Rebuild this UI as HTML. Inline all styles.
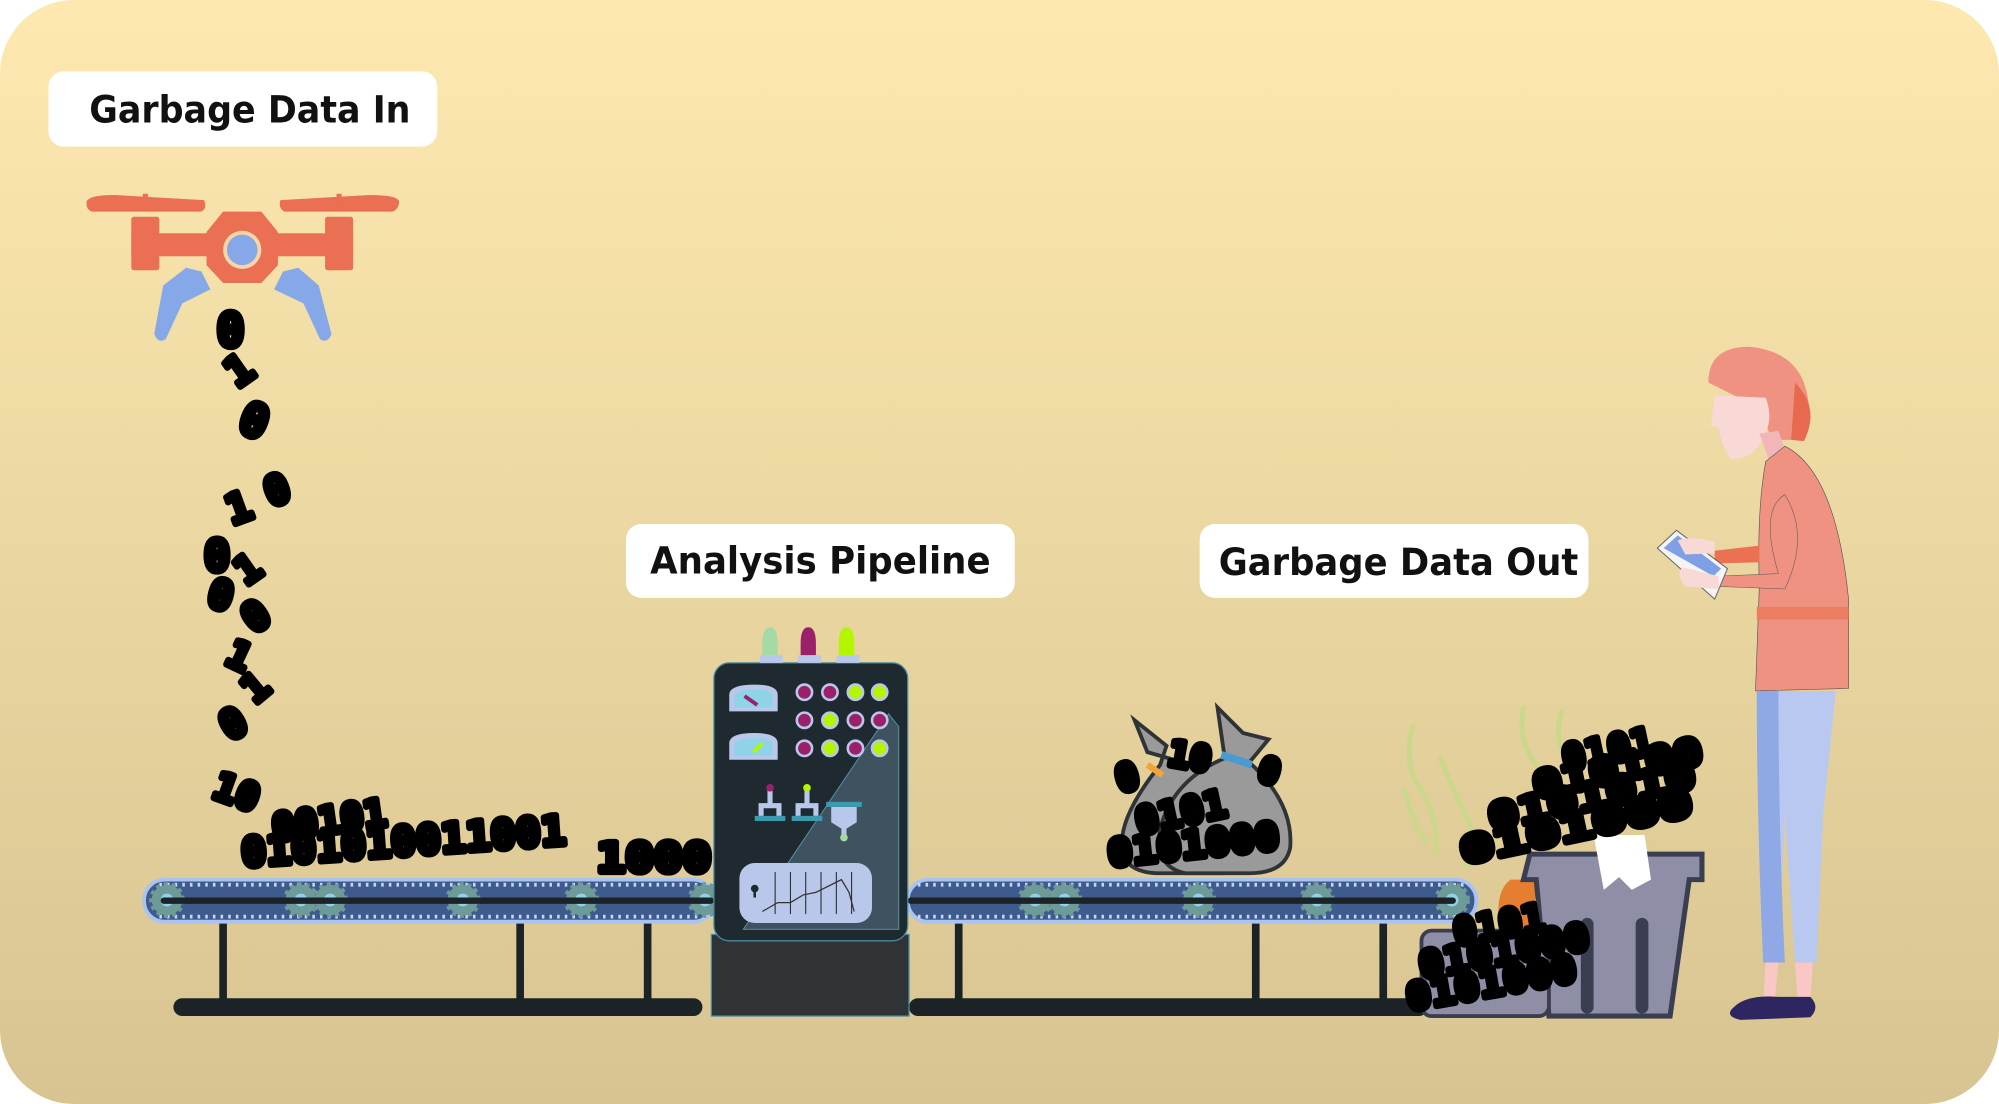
<!DOCTYPE html>
<html><head><meta charset="utf-8"><style>
html,body{margin:0;padding:0;background:#fff;}
svg{display:block}
.lbl{font-family:"DejaVu Sans","Liberation Sans",sans-serif;font-weight:bold;font-size:29px;fill:#111}
.d{font-family:"DejaVu Sans Mono","Liberation Mono",monospace;font-weight:bold;fill:#000;stroke:#000;stroke-width:5;stroke-linejoin:round}
</style></head><body>
<svg width="1999" height="1104" viewBox="0 0 1568 866" preserveAspectRatio="none" xmlns="http://www.w3.org/2000/svg">
<defs>
<linearGradient id="bg" x1="0" y1="0" x2="0" y2="1"><stop offset="0" stop-color="#fde9b0"/><stop offset="1" stop-color="#d8c491"/></linearGradient>
<g id="gear"><circle r="12" fill="#6e9b98" stroke="#6e9b98" stroke-width="4" stroke-dasharray="3 3"/><circle r="5" fill="#8fd3e8"/></g>
</defs>
<rect x="0" y="0" width="1568" height="866" rx="58" fill="url(#bg)"/>

<!-- labels -->
<rect x="38" y="56" width="305" height="59" rx="12" fill="#fff"/>
<text x="70" y="96" class="lbl" textLength="252" lengthAdjust="spacingAndGlyphs">Garbage Data In</text>
<rect x="491" y="411" width="305" height="58" rx="12" fill="#fff"/>
<text x="510" y="450" class="lbl" textLength="267" lengthAdjust="spacingAndGlyphs">Analysis Pipeline</text>
<rect x="941" y="411" width="305" height="58" rx="12" fill="#fff"/>
<text x="956" y="451" class="lbl" textLength="282" lengthAdjust="spacingAndGlyphs">Garbage Data Out</text>

<!-- drone -->
<path d="M68 158 Q70 153 90 153 L160 157 Q163 163 158 166 L72 166 Q67 164 68 158Z" fill="#ea6f53"/>
<path d="M220 157 L290 153 Q312 153 313 158 Q313 164 308 166 L223 166 Q218 163 220 157Z" fill="#ea6f53"/>
<rect x="112" y="152" width="4" height="12" fill="#ea6f53"/><rect x="264" y="152" width="4" height="12" fill="#ea6f53"/>
<rect x="103" y="170" width="22" height="42" rx="2" fill="#ea6f53"/>
<rect x="255" y="170" width="22" height="42" rx="2" fill="#ea6f53"/>
<rect x="103" y="183" width="174" height="18" fill="#ea6f53"/>
<path d="M175 166 L205 166 L218 182 L218 208 L205 222 L175 222 L162 208 L162 182Z" fill="#ea6f53"/>
<circle cx="190" cy="196" r="15" fill="#f7d6a6"/><circle cx="190" cy="196" r="12" fill="#87a8e8"/>
<path d="M158 213 L146 210 L128 224 L121 262 Q124 270 130 266 L143 238 L165 227Z" fill="#87a8e8"/>
<path d="M222 213 L234 210 L250 224 L260 262 Q257 270 251 266 L238 238 L215 227Z" fill="#87a8e8"/>

<!-- falling digits -->
<g class="d">
<text x="170" y="272" font-size="36">0</text>
<text x="0" y="0" font-size="32" transform="translate(186,305) rotate(-35)">1</text>
<text x="0" y="0" font-size="36" transform="translate(185,338) rotate(20)">0</text>
<text x="0" y="0" font-size="32" transform="translate(182,412) rotate(-20)">1</text>
<text x="0" y="0" font-size="32" transform="translate(212,398) rotate(-20)">0</text>
<text x="160" y="448" font-size="34">0</text>
<text x="0" y="0" font-size="30" transform="translate(193,460) rotate(-35)">1</text>
<text x="0" y="0" font-size="32" transform="translate(161,475) rotate(15)">0</text>
<text x="0" y="0" font-size="32" transform="translate(199,498) rotate(-35)">0</text>
<text x="0" y="0" font-size="30" transform="translate(175,520) rotate(25)">1</text>
<text x="0" y="0" font-size="30" transform="translate(200,553) rotate(-40)">1</text>
<text x="0" y="0" font-size="32" transform="translate(180,582) rotate(-30)">0</text>
<text x="0" y="0" font-size="30" transform="translate(165,625) rotate(20)">10</text>
<text x="0" y="0" font-size="32" transform="translate(190,680) rotate(-4)" textLength="255" lengthAdjust="spacingAndGlyphs">0101010011001</text>
<text x="0" y="0" font-size="30" transform="translate(215,660) rotate(-8)">00101</text>
<text x="468" y="684" font-size="32" textLength="90" lengthAdjust="spacingAndGlyphs">1000</text>
</g>

<!-- conveyor legs -->
<g fill="#1c2326">
<rect x="172" y="712" width="6" height="72"/><rect x="405" y="712" width="6" height="72"/><rect x="505" y="712" width="6" height="72"/>
<rect x="749" y="712" width="6" height="72"/><rect x="982" y="712" width="6" height="72"/><rect x="1082" y="712" width="6" height="72"/>
<rect x="136" y="783" width="415" height="14" rx="7"/><rect x="713" y="783" width="407" height="14" rx="7"/>
</g>
<g stroke="#a9c4f0" stroke-width="3" fill="#3f5a8c">
<rect x="113" y="690" width="447" height="33" rx="16"/>
<rect x="712" y="690" width="446" height="33" rx="16"/>
</g>
<g stroke="#c6d7f6" stroke-width="3" stroke-dasharray="2 4" fill="none">
<line x1="125" y1="694" x2="560" y2="694"/><line x1="125" y1="719" x2="560" y2="719"/>
<line x1="720" y1="694" x2="1148" y2="694"/><line x1="720" y1="719" x2="1148" y2="719"/>
</g>
<g>
<use href="#gear" x="131" y="706"/><use href="#gear" x="236" y="706"/><use href="#gear" x="259" y="706"/><use href="#gear" x="363" y="706"/><use href="#gear" x="456" y="706"/><use href="#gear" x="553" y="706"/>
<use href="#gear" x="812" y="706"/><use href="#gear" x="835" y="706"/><use href="#gear" x="940" y="706"/><use href="#gear" x="1033" y="706"/><use href="#gear" x="1139" y="706"/>
</g>
<rect x="126" y="704" width="434" height="5" rx="2.5" fill="#1c2326"/>
<rect x="712" y="704" width="430" height="5" rx="2.5" fill="#1c2326"/>

<!-- machine -->
<rect x="558" y="733" width="155" height="64" fill="#2f3335" stroke="#4a8aa0"/>
<rect x="560" y="520" width="152" height="218" rx="12" fill="#1f2a30" stroke="#4a8aa0"/>
<path d="M583 729 L697 560 L705 570 L705 729Z" fill="#3e5260" stroke="#5a9ab0" stroke-width="0.7"/>
<path d="M598 505 Q598 492 604 492 Q610 492 610 505 L610 514 L598 514Z" fill="#a5d9a5"/>
<path d="M628 505 Q628 492 634 492 Q640 492 640 505 L640 514 L628 514Z" fill="#9c1f6a"/>
<path d="M658 505 Q658 492 664 492 Q670 492 670 505 L670 514 L658 514Z" fill="#b4f500"/>
<g fill="#b9c8ea"><rect x="596" y="514" width="18" height="6"/><rect x="626" y="514" width="18" height="6"/><rect x="656" y="514" width="18" height="6"/></g>
<path d="M572 558 L572 545 Q572 537 592 537 Q610 537 610 545 L610 558Z" fill="#b9c8ea"/>
<path d="M576 555 L576 546 Q578 541 592 541 Q606 541 606 546 L606 555Z" fill="#8fd3e8"/>
<line x1="584" y1="546" x2="594" y2="553" stroke="#9c1f6a" stroke-width="3"/>
<path d="M572 596 L572 583 Q572 575 592 575 Q610 575 610 583 L610 596Z" fill="#b9c8ea"/>
<path d="M576 593 L576 584 Q578 579 592 579 Q606 579 606 584 L606 593Z" fill="#8fd3e8"/>
<line x1="598" y1="583" x2="591" y2="590" stroke="#b4f500" stroke-width="3"/>
<g stroke="#b9c8ea" stroke-width="2">
<circle cx="631" cy="543" r="6" fill="#9c1f6a"/><circle cx="651" cy="543" r="6" fill="#9c1f6a"/><circle cx="671" cy="543" r="6" fill="#b4f500"/><circle cx="690" cy="543" r="6" fill="#b4f500"/>
<circle cx="631" cy="565" r="6" fill="#9c1f6a"/><circle cx="651" cy="565" r="6" fill="#b4f500"/><circle cx="671" cy="565" r="6" fill="#9c1f6a"/><circle cx="690" cy="565" r="6" fill="#9c1f6a"/>
<circle cx="631" cy="587" r="6" fill="#9c1f6a"/><circle cx="651" cy="587" r="6" fill="#b4f500"/><circle cx="671" cy="587" r="6" fill="#9c1f6a"/><circle cx="690" cy="587" r="6" fill="#b4f500"/>
</g>
<g fill="#b9c8ea">
<path d="M595 640 L595 630 L602 630 L602 620 L606 620 L606 630 L613 630 L613 640 L609 640 L609 634 L599 634 L599 640Z"/>
<path d="M624 640 L624 630 L631 630 L631 620 L635 620 L635 630 L642 630 L642 640 L638 640 L638 634 L628 634 L628 640Z"/>
<path d="M652 633 L672 633 L672 645 L664 650 L664 656 L660 656 L660 650 L652 645Z"/>
</g>
<rect x="592" y="640" width="24" height="4" fill="#3b9ab0"/><rect x="621" y="640" width="24" height="4" fill="#3b9ab0"/><rect x="648" y="629" width="28" height="4" fill="#3b9ab0"/>
<circle cx="604" cy="618" r="3" fill="#9c1f6a"/><circle cx="633" cy="618" r="3" fill="#b4f500"/><circle cx="662" cy="657" r="3" fill="#a5d9a5"/>
<rect x="580" y="677" width="104" height="47" rx="12" fill="#b9c8ea"/>
<g stroke="#222" stroke-width="0.8"><line x1="608" y1="684" x2="608" y2="717"/><line x1="620" y1="684" x2="620" y2="717"/><line x1="632" y1="684" x2="632" y2="717"/><line x1="644" y1="684" x2="644" y2="717"/><line x1="656" y1="684" x2="656" y2="717"/><line x1="668" y1="684" x2="668" y2="717"/></g>
<polyline points="598,715 610,708 620,708 630,702 640,700 660,690 666,700 670,715" fill="none" stroke="#333" stroke-width="1"/>
<circle cx="592" cy="697" r="3" fill="#1f2a30"/><rect x="591" y="697" width="2" height="7" fill="#1f2a30"/>

<!-- bags -->
<path d="M900 590 L890 565 L915 585 L910 600 Q878 640 880 665 Q882 685 910 685 L960 685 Q985 680 975 650 Q965 615 935 600Z" fill="#9a9a9a" stroke="#2f3335" stroke-width="3"/>
<path d="M960 590 L955 555 L975 575 L995 580 L980 598 Q1015 630 1012 665 Q1008 685 980 685 L930 685 Q905 680 910 650 Q920 612 960 595Z" fill="#9a9a9a" stroke="#2f3335" stroke-width="3"/>
<path d="M958 592 L982 600" stroke="#4a9bd0" stroke-width="6"/>
<path d="M900 600 L912 608" stroke="#f2a33a" stroke-width="5"/>
<g class="d">
<text x="0" y="0" font-size="30" transform="translate(878,622) rotate(-15)">0</text>
<text x="0" y="0" font-size="28" transform="translate(915,600) rotate(10)">10</text>
<text x="0" y="0" font-size="28" transform="translate(985,612) rotate(15)">0</text>
<text x="0" y="0" font-size="30" transform="translate(893,655) rotate(-12)">0101</text>
<text x="0" y="0" font-size="30" transform="translate(870,680) rotate(-6)" textLength="135" lengthAdjust="spacingAndGlyphs">0101000</text>
</g>

<!-- stink -->
<g fill="none" stroke="#c9d98a" stroke-width="4" stroke-linecap="round" opacity="0.9">
<path d="M1108 570 Q1100 600 1115 620 Q1130 645 1125 670"/><path d="M1130 595 Q1140 620 1150 640 Q1160 660 1150 680"/>
<path d="M1195 555 Q1190 580 1205 600"/><path d="M1225 558 Q1218 580 1230 598"/><path d="M1102 620 Q1108 645 1118 660"/>
</g>
<!-- trash bin -->
<path d="M1185 690 Q1170 700 1178 740 L1200 760 L1205 690Z" fill="#e67e30"/>
<path d="M1200 670 L1335 670 L1335 690 L1325 690 L1310 797 L1215 797 L1205 690 L1195 690Z" fill="#8e8fa6" stroke="#3a3e50" stroke-width="4"/>
<path d="M1250 655 L1290 655 L1295 690 L1280 698 L1270 688 L1258 698 Z" fill="#fff"/>
<g fill="#3a3e50"><rect x="1240" y="720" width="10" height="75" rx="5"/><rect x="1283" y="720" width="10" height="75" rx="5"/></g>
<rect x="1115" y="730" width="100" height="67" rx="8" fill="#8e8fa6" stroke="#3a3e50" stroke-width="3"/>
<g class="d">
<text x="0" y="0" font-size="30" transform="translate(1142,742) rotate(-10)">0101</text>
<text x="0" y="0" font-size="30" transform="translate(1115,768) rotate(-10)" textLength="135" lengthAdjust="spacingAndGlyphs">0101000</text>
<text x="0" y="0" font-size="30" transform="translate(1105,793) rotate(-10)" textLength="135" lengthAdjust="spacingAndGlyphs">0101000</text>
<text x="0" y="0" font-size="30" transform="translate(1148,678) rotate(-12)" textLength="185" lengthAdjust="spacingAndGlyphs">0101000</text>
<text x="0" y="0" font-size="30" transform="translate(1170,652) rotate(-12)" textLength="165" lengthAdjust="spacingAndGlyphs">0101010</text>
<text x="0" y="0" font-size="30" transform="translate(1205,627) rotate(-12)" textLength="135" lengthAdjust="spacingAndGlyphs">010100</text>
<text x="0" y="0" font-size="30" transform="translate(1228,606) rotate(-12)">0101</text>
</g>

<!-- person -->
<path d="M1340 300 Q1340 272 1372 272 Q1405 275 1415 300 Q1425 330 1410 345 L1390 345 L1380 320 Z" fill="#f09282"/>
<path d="M1408 300 Q1428 320 1415 346 L1405 345 Z" fill="#e86a4e"/>
<path d="M1345 310 L1385 312 Q1392 330 1382 345 Q1375 360 1358 360 Q1350 350 1348 335 L1342 334Z" fill="#f9d9d6"/>
<path d="M1380 340 L1395 338 L1400 352 L1388 362Z" fill="#f2b6b8"/>
<path d="M1385 362 L1400 350 Q1440 370 1450 470 L1450 540 L1377 542 L1380 460 Q1378 400 1385 362Z" fill="#f09282" stroke="#555" stroke-width="0.5"/>
<rect x="1378" y="476" width="72" height="10" fill="#ec7c62"/>
<path d="M1400 388 Q1380 400 1395 450 L1346 452 L1346 460 L1400 462 Q1420 420 1400 388Z" fill="#f09282" stroke="#555" stroke-width="0.4"/>
<path d="M1345 432 L1380 428 L1380 441 L1345 442Z" fill="#ec7052"/>
<path d="M1300 430 L1315 416 L1355 446 L1345 470Z" fill="#f4f4f4" stroke="#666" stroke-width="0.8"/>
<path d="M1305 430 L1316 420 L1350 446 L1344 452Z" fill="#7f9fe6"/>
<path d="M1316 424 Q1325 420 1345 425 L1345 434 L1322 435Z M1320 445 L1348 452 L1348 462 L1322 460 Q1314 450 1320 445Z" fill="#f9d9d6"/>
<path d="M1378 542 L1440 542 L1430 640 L1425 755 L1408 755 L1400 640 L1395 755 L1383 755 Q1378 640 1378 542Z" fill="#b9c8f0"/>
<path d="M1378 542 L1395 542 Q1395 650 1400 755 L1383 755 Q1378 640 1378 542Z" fill="#8fa8e6"/>
<path d="M1385 755 L1395 755 L1392 785 L1383 785Z M1408 755 L1422 755 L1420 785 L1410 785Z" fill="#f9c8c6"/>
<path d="M1360 790 Q1370 780 1395 782 L1420 782 Q1428 790 1420 798 L1365 800 Q1352 797 1360 790Z" fill="#2d2660"/>
</svg>
</body></html>
